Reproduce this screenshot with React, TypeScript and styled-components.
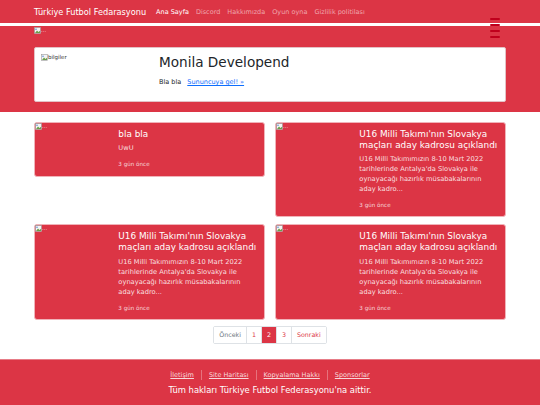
import * as React from "react";
import styled, { createGlobalStyle } from "styled-components";

const RED = "#dc3545";

const GlobalStyle = createGlobalStyle`
  body {
    margin: 0;
    background: #fff;
    font-family: "DejaVu Sans", "Liberation Sans", sans-serif;
    color: #212529;
  }
`;

interface INews {
  title: string;
  text: string;
  date: string;
}

const u16 = {
  title: "U16 Milli Takımı'nın Slovakya maçları aday kadrosu açıklandı",
  text: "U16 Milli Takımımızın 8-10 Mart 2022 tarihlerinde Antalya'da Slovakya ile oynayacağı hazırlık müsabakalarının aday kadro...",
  date: "3 gün önce",
};

const news: INews[] = [{ title: "bla bla", text: "UwU", date: "3 gün önce" }, u16, u16, u16];

const navLinks = ["Ana Sayfa", "Discord", "Hakkımızda", "Oyun oyna", "Gizlilik politilası"];
const footerLinks = ["İletişim", "Site Haritası", "Kopyalama Hakkı", "Sponsorlar"];

const BrokenImage: React.FC<{ alt: string; dark?: boolean }> = ({ alt, dark }) => (
  <Broken dark={dark}>
    <svg width="7" height="7" viewBox="0 0 7 7">
      <rect x="0.5" y="0.5" width="6" height="6" fill="#f4f4f4" stroke="#9a9a9a" strokeWidth="0.6" />
      <path d="M1 6 L3 3.5 L4.5 5 L6 3.8 V6 Z" fill="#6aa04a" />
      <circle cx="2" cy="2.2" r="0.8" fill="#5a8fd6" />
    </svg>
    {alt}
  </Broken>
);

const App: React.FC = () => {
  return (
    <Page>
      <GlobalStyle />
      <Navbar>
        <Container>
          <Brand>Türkiye Futbol Fedarasyonu</Brand>
          <NavList>
            {navLinks.map((l, i) => (
              <NavLink key={l} active={i === 0}>
                {l}
              </NavLink>
            ))}
          </NavList>
        </Container>
      </Navbar>
      <Hero>
        <Indicators>
          <span />
          <span />
          <span />
          <span />
        </Indicators>
        <Container column>
          <SlideRow>
            <BrokenImage alt="..." />
          </SlideRow>
          <InfoBox>
            <InfoImage>
              <BrokenImage alt="bilgiler" dark />
            </InfoImage>
            <InfoBody>
              <InfoTitle>Monila Developend</InfoTitle>
              <InfoText>
                Bla bla <InfoLink href="#">Sununcuya gel! »</InfoLink>
              </InfoText>
            </InfoBody>
          </InfoBox>
        </Container>
      </Hero>
      <Container column>
        <CardGrid>
          {news.map((n, i) => (
            <Card key={i}>
              <CardImage>
                <BrokenImage alt="..." />
              </CardImage>
              <CardBody>
                <CardTitle>{n.title}</CardTitle>
                <CardText>{n.text}</CardText>
                <CardDate>{n.date}</CardDate>
              </CardBody>
            </Card>
          ))}
        </CardGrid>
        <Pagination>
          <PageItem disabled>Önceki</PageItem>
          <PageItem>1</PageItem>
          <PageItem active>2</PageItem>
          <PageItem>3</PageItem>
          <PageItem>Sonraki</PageItem>
        </Pagination>
      </Container>
      <Footer>
        <FooterLinks>
          {footerLinks.map(l => (
            <FooterLink key={l} href="#">
              {l}
            </FooterLink>
          ))}
        </FooterLinks>
        <Copyright>Tüm hakları Türkiye Futbol Federasyonu'na aittir.</Copyright>
      </Footer>
    </Page>
  );
};

export default App;

const Page = styled.div`
  position: relative;
  min-height: 405px;
`;

const Container = styled.div<{ column?: boolean }>`
  width: 472px;
  margin: 0 auto;
  display: flex;
  flex-direction: ${p => (p.column ? "column" : "row")};
  align-items: ${p => (p.column ? "stretch" : "center")};
`;

const Navbar = styled.nav`
  background: ${RED};
  height: 23px;
  border-bottom: 3px solid #fff;
  display: flex;
  align-items: center;
`;

const Brand = styled.div`
  color: #fff;
  font-size: 8.2px;
  margin-right: 10px;
  white-space: nowrap;
`;

const NavList = styled.div`
  display: flex;
  gap: 7px;
`;

const NavLink = styled.a<{ active?: boolean }>`
  font-size: 6.5px;
  color: ${p => (p.active ? "#fff" : "rgba(255,255,255,0.55)")};
  text-decoration: none;
  white-space: nowrap;
`;

const Hero = styled.section`
  position: relative;
  background: ${RED};
  padding: 1px 0 10px;
`;

const Indicators = styled.div`
  position: absolute;
  top: -8px;
  right: 40px;
  display: flex;
  flex-direction: column;
  gap: 4px;
  span {
    display: block;
    width: 10px;
    height: 2px;
    border-radius: 1px;
    background: #c0001c;
  }
`;

const SlideRow = styled.div`
  height: 20px;
  display: flex;
  align-items: flex-start;
`;

const Broken = styled.span<{ dark?: boolean }>`
  display: flex;
  align-items: center;
  font-size: 5.5px;
  line-height: 7px;
  color: ${p => (p.dark ? "#333" : "rgba(255,255,255,0.8)")};
`;

const InfoBox = styled.div`
  background: #fff;
  border: 1px solid #e3c2c6;
  border-radius: 2px;
  height: 55px;
  box-sizing: border-box;
  padding: 6px;
  display: flex;
`;

const InfoImage = styled.div`
  width: 118px;
  flex: 0 0 118px;
  display: flex;
  align-items: flex-start;
`;

const InfoBody = styled.div`
  display: flex;
  flex-direction: column;
`;

const InfoTitle = styled.h1`
  margin: 0 0 7px;
  font-size: 13.6px;
  font-weight: 400;
  line-height: 17px;
  color: #212529;
`;

const InfoText = styled.p`
  margin: 0;
  font-size: 6.5px;
  line-height: 9px;
  color: #212529;
`;

const InfoLink = styled.a`
  color: #0d6efd;
  margin-left: 4px;
`;

const CardGrid = styled.div`
  margin-top: 10px;
  display: grid;
  grid-template-columns: 1fr 1fr;
  column-gap: 10px;
  row-gap: 7px;
  align-items: start;
`;

const Card = styled.div`
  background: ${RED};
  border: 1px solid #f0b3b9;
  border-radius: 3px;
  display: flex;
  align-items: flex-start;
`;

const CardImage = styled.div`
  flex: 0 0 33.333%;
  display: flex;
`;

const CardBody = styled.div`
  flex: 1;
  padding: 6px 3px 7px 7px;
`;

const CardTitle = styled.h5`
  margin: 0 0 3.6px;
  font-size: 8.9px;
  font-weight: 400;
  line-height: 10.8px;
  color: #fff;
`;

const CardText = styled.p`
  margin: 0 0 7px;
  padding-right: 4px;
  font-size: 6.7px;
  line-height: 10px;
  color: rgba(255, 255, 255, 0.85);
`;

const CardDate = styled.small`
  display: block;
  font-size: 5.6px;
  line-height: 8.3px;
  color: rgba(255, 255, 255, 0.8);
`;

const Pagination = styled.ul`
  list-style: none;
  margin: 6px auto 0;
  padding: 0;
  display: flex;
  border: 1px solid #dee2e6;
  border-radius: 2px;
`;

const PageItem = styled.li<{ active?: boolean; disabled?: boolean }>`
  font-size: 6.3px;
  line-height: 16px;
  height: 16px;
  padding: 0 5px;
  border-left: 1px solid #dee2e6;
  &:first-child {
    border-left: none;
  }
  background: ${p => (p.active ? RED : "#fff")};
  color: ${p => (p.active ? "#fff" : p.disabled ? "#6c757d" : RED)};
`;

const Footer = styled.footer`
  margin-top: 15px;
  background: ${RED};
  border-top: 1px solid #e77c87;
  padding: 10px 0 12px;
  display: flex;
  flex-direction: column;
  align-items: center;
`;

const FooterLinks = styled.div`
  display: flex;
  align-items: center;
`;

const FooterLink = styled.a`
  font-size: 6.5px;
  line-height: 10px;
  padding: 0 7px;
  color: rgba(255, 255, 255, 0.8);
  border-left: 1px solid rgba(255, 255, 255, 0.3);
  &:first-child {
    border-left: none;
  }
`;

const Copyright = styled.div`
  margin-top: 4px;
  font-size: 8.4px;
  line-height: 12px;
  color: #fff;
`;
